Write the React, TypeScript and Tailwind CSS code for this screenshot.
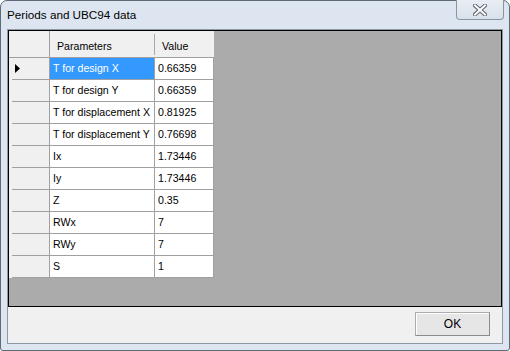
import React from "react";

const rows: [string, string][] = [
  ["T for design X", "0.66359"],
  ["T for design Y", "0.66359"],
  ["T for displacement X", "0.81925"],
  ["T for displacement Y", "0.76698"],
  ["Ix", "1.73446"],
  ["Iy", "1.73446"],
  ["Z", "0.35"],
  ["RWx", "7"],
  ["RWy", "7"],
  ["S", "1"],
];

export default function App() {
  return (
    <div
      className="w-[510px] h-[351px] bg-white"
      style={{ fontFamily: '"Liberation Sans", Arial, sans-serif' }}
    >
      <div className="w-[510px] h-[351px] border border-[#5f6a76] rounded-t-[7px] rounded-b-[3px] bg-[#dde6f0] flex flex-col">
        {/* title bar */}
        <div className="h-[28px] shrink-0 flex justify-between">
          <div className="pl-[6px] pt-[8px] text-[11.7px] leading-[12px] text-black">
            Periods and UBC94 data
          </div>
          <div className="mr-[5px] mt-[-1px] w-[48px] h-[20px] border border-[#8a95a2] border-t-0 rounded-b-[4px] bg-gradient-to-b from-[#e9eef4] to-[#d8e1eb] flex items-center justify-center">
            <svg width="14" height="12" viewBox="0 0 14 12">
              <path
                d="M2 1.5 L12 10.5 M12 1.5 L2 10.5"
                stroke="#5b6470"
                strokeWidth="4"
                strokeLinecap="square"
              />
              <path
                d="M2 1.5 L12 10.5 M12 1.5 L2 10.5"
                stroke="#ffffff"
                strokeWidth="2"
                strokeLinecap="square"
              />
            </svg>
          </div>
        </div>
        {/* client */}
        <div className="mx-[6px] border border-[#8e99a6] flex-1 flex flex-col bg-[#f0f0f0]">
          <div className="h-[277px] border border-black bg-[#ababab] flex items-start">
            <div className="flex flex-col text-[10.6px] leading-[13px] text-black">
              {/* header */}
              <div className="flex h-[27px] border-b border-[#a0a0a0] bg-[#f0f0f0]">
                <div className="w-[41px] border-r border-[#a0a0a0]" />
                <div className="w-[105px] pl-[7px] pt-[9px] relative">
                  Parameters
                  <div className="absolute right-0 top-[3px] h-[21px] w-px bg-[#a9a9a9]" />
                </div>
                <div className="w-[59px] pl-[7px] pt-[9px]">Value</div>
              </div>
              {rows.map(([p, v], i) => (
                <div key={i} className="flex h-[22px]">
                  <div className="w-[41px] border-r border-[#a0a0a0] bg-[#f0f0f0] flex flex-col">
                    <div className="flex-1 flex items-center pl-[6px]">
                      {i === 0 && (
                        <svg width="5" height="9" viewBox="0 0 5 9">
                          <path d="M0 0 L5 4.5 L0 9 Z" fill="#000" />
                        </svg>
                      )}
                    </div>
                    <div className="ml-[3px] h-px bg-[#a0a0a0]" />
                  </div>
                  <div
                    className={`w-[105px] border-r border-b border-[#a0a0a0] pl-[3px] pt-[4px] whitespace-nowrap ${
                      i === 0 ? "bg-[#3399ff] text-white" : "bg-white"
                    }`}
                  >
                    {p}
                  </div>
                  <div className="w-[59px] border-r border-b border-[#a0a0a0] bg-white pl-[3px] pt-[4px]">
                    {v}
                  </div>
                </div>
              ))}
            </div>
          </div>
          <div className="flex-1 flex justify-end items-start pt-[5px] pr-[12px]">
            <button className="w-[75px] h-[24px] bg-[#e6e6e6] border border-[#adadad] border-r-[#8c8c8c] border-b-[#8c8c8c] shadow-[inset_1px_1px_0_#ffffff] text-[12px] leading-[12px] text-black">
              OK
            </button>
          </div>
        </div>
        <div className="h-[6px] shrink-0" />
      </div>
    </div>
  );
}
